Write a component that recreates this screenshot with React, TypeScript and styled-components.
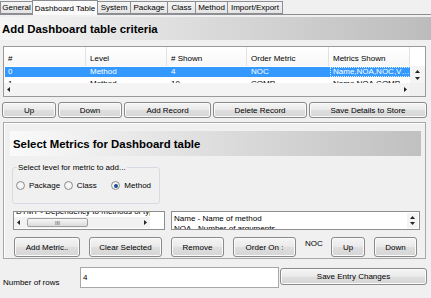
import React from "react";
import styled, { createGlobalStyle } from "styled-components";

const Global = createGlobalStyle`
  html, body { margin: 0; padding: 0; background: #f0f0f0; }
  body { font-family: "Liberation Sans", Arial, sans-serif; font-size: 8px; color: #000; }
  * { box-sizing: border-box; }
`;

const Root = styled.div`
  width: 431px;
  height: 298px;
  overflow: hidden;
  background: #f0f0f0;
`;

const TabStrip = styled.div`
  display: flex;
  align-items: flex-end;
  height: 15px;
  border-bottom: 1px solid #8c8e94;
`;

const Tab = styled.div<{ $w: number; $active?: boolean }>`
  width: ${(p) => p.$w}px;
  height: ${(p) => (p.$active ? 15 : 13)}px;
  margin-bottom: ${(p) => (p.$active ? -1 : 0)}px;
  margin-left: -1px;
  &:first-child { margin-left: 0; }
  border: 1px solid #8c8e94;
  border-bottom: ${(p) => (p.$active ? "none" : "1px solid #8c8e94")};
  background: ${(p) => (p.$active ? "#fafafa" : "linear-gradient(#f4f4f4, #e4e4e4)")};
  display: flex;
  align-items: center;
  justify-content: center;
  font-size: 8px;
  white-space: nowrap;
  position: relative;
  z-index: ${(p) => (p.$active ? 1 : 0)};
`;

const HeadingBar = styled.div<{ $size: number }>`
  height: ${(p) => p.$size}px;
  display: flex;
  align-items: center;
  padding-left: 3px;
  background: linear-gradient(to right, #f6f6f6, #bcbcbc);
  font-weight: bold;
  font-size: 11.4px;
  white-space: nowrap;
`;

const TopHeading = styled(HeadingBar)`
  margin-top: 2px;
  padding-left: 2px;
`;

const TableBox = styled.div`
  margin: 6px 0 0 3px;
  width: 423px;
  height: 51px;
  border: 1px solid #9a9a9a;
  background: #fff;
  display: grid;
  grid-template-columns: 406px 15px;
  grid-template-rows: 19px 17px 13px;
`;

const cols = "82px 81px 80px 82px 81px";

const HeaderRow = styled.div`
  display: grid;
  grid-template-columns: ${cols};
  background: linear-gradient(#ffffff, #f7f7f7);
`;

const HeaderCell = styled.div`
  border-right: 1px solid #e2e2e2;
  display: flex;
  align-items: center;
  padding-left: 4px;
  padding-top: 3px;
  white-space: nowrap;
`;

const Body = styled.div`
  overflow: hidden;
  padding-top: 1px;
`;

const Row = styled.div<{ $sel?: boolean }>`
  display: grid;
  grid-template-columns: ${cols};
  height: ${(p) => (p.$sel ? 10 : 11)}px;
  line-height: 10px;
  padding-top: ${(p) => (p.$sel ? 0 : 2)}px;
  background: ${(p) => (p.$sel ? "#3399ff" : "#fff")};
  color: ${(p) => (p.$sel ? "#fff" : "#000")};
  margin-left: 1px;
`;

const Cell = styled.div<{ $focus?: boolean }>`
  padding-left: 3px;
  white-space: nowrap;
  overflow: hidden;
  text-overflow: ellipsis;
  outline: ${(p) => (p.$focus ? "1px dotted #d8eaff" : "none")};
  outline-offset: -1px;
`;

const VScroll = styled.div`
  background: #f4f4f4;
  display: flex;
  flex-direction: column;
  align-items: center;
  justify-content: center;
  gap: 4px;
`;

const HScroll = styled.div`
  background: #f4f4f4;
  display: flex;
  align-items: center;
  justify-content: space-between;
  padding: 0 3px;
`;

const Corner = styled.div<{ $white?: boolean }>`
  background: ${(p) => (p.$white ? "#fff" : "#f0f0f0")};
`;

const ButtonRow = styled.div<{ $cols: string }>`
  display: grid;
  grid-template-columns: ${(p) => p.$cols};
`;

const TopButtons = styled(ButtonRow)`
  margin: 5px 0 0 2px;
  height: 16px;
  column-gap: 2px;
`;

const Button = styled.button`
  font-family: inherit;
  font-size: 8px;
  color: #000;
  height: 100%;
  padding: 0;
  border: 1px solid #8a8a8a;
  border-radius: 3px;
  background: linear-gradient(#f5f5f5, #e9e9e9 50%, #dedede 51%, #d6d6d6);
  box-shadow: inset 0 0 0 1px #fbfbfb;
  white-space: nowrap;
`;

const Panel = styled.div`
  margin: 4px 0 0 3px;
  width: 423px;
  height: 137px;
  border: 1px solid #a8a8a8;
  box-shadow: inset 1px 1px 0 #ffffff;
  padding: 8px 4px 1px 6px;
  display: flex;
  flex-direction: column;
`;

const SectionHeading = styled(HeadingBar)`
  flex: 0 0 auto;
  padding-left: 3px;
  background: linear-gradient(to right, #fafafa, #c0c0c0);
`;

const GroupBox = styled.fieldset`
  margin: 7px 0 0 2px;
  padding: 0 0 0 3px;
  width: 148px;
  height: 41px;
  border: 1px solid #d5dbe0;
  border-radius: 3px;
  min-width: 0;
`;

const Legend = styled.legend`
  padding: 0 1px;
  margin-left: 1px;
  font-size: 8px;
  line-height: 9px;
`;

const RadioRow = styled.div`
  display: flex;
  margin-top: 9px;
`;

const RadioItem = styled.label<{ $w: number }>`
  width: ${(p) => p.$w}px;
  display: flex;
  align-items: center;
  gap: 4px;
  font-size: 8px;
`;

const RadioCircle = styled.span<{ $on?: boolean }>`
  width: 9px;
  height: 9px;
  border-radius: 50%;
  border: 1px solid #8e8f8f;
  background: radial-gradient(circle, #ffffff 0%, #e6e6e6 100%);
  display: flex;
  align-items: center;
  justify-content: center;
  &::after {
    content: "";
    width: 4px;
    height: 4px;
    border-radius: 50%;
    background: ${(p) => (p.$on ? "#1c4f8e" : "transparent")};
  }
`;

const ListRow = styled.div`
  display: grid;
  grid-template-columns: 152px 249px;
  column-gap: 6px;
  height: 19px;
  margin: 7px 0 0 3px;
`;

const ListBox = styled.div`
  border: 1px solid #8f8f8f;
  background: #fff;
  overflow: hidden;
  display: grid;
  grid-template-rows: 5px 11px;
  grid-template-columns: 136px 14px;
`;

const ClippedText = styled.div<{ $shift: number }>`
  overflow: hidden;
  white-space: nowrap;
  line-height: 9px;
  padding-left: 2px;
  & > span { display: block; margin-top: ${(p) => p.$shift}px; }
`;

const ListScroll = styled.div`
  background: #f2f2f2;
  display: flex;
  align-items: center;
  padding: 0 3px;
  gap: 7px;
`;

const Thumb = styled.div`
  width: 61px;
  height: 9px;
  border: 1px solid #a0a0a0;
  border-radius: 2px;
  background: linear-gradient(#f6f6f6, #dcdcdc);
  display: flex;
  align-items: center;
  justify-content: center;
  font-size: 6px;
  line-height: 6px;
  color: #555;
`;

const Spacer = styled.span`
  flex: 1;
`;

const ListCorner = styled.div`
  grid-column: 2;
  grid-row: 1 / span 2;
  background: #fff;
`;

const TextArea = styled.div`
  border: 1px solid #8f8f8f;
  background: #fff;
  display: grid;
  grid-template-columns: 1fr 12px;
  overflow: hidden;
`;

const TextLines = styled.div`
  padding: 2px 0 0 2px;
  line-height: 10px;
  white-space: nowrap;
  overflow: hidden;
`;

const TAScroll = styled.div`
  display: flex;
  flex-direction: column;
  align-items: center;
  justify-content: center;
  gap: 3px;
  background: #f4f4f4;
  margin: 1px 1px 1px 0;
`;

const BottomButtons = styled(ButtonRow)`
  margin: 7px 0 0 4px;
  height: 20px;
  column-gap: 9px;
`;

const NocLabel = styled.span`
  align-self: start;
  padding-top: 2px;
  text-align: center;
`;

const EntryRow = styled.div`
  display: grid;
  grid-template-columns: 77px 199px 148px;
  margin: 8px 0 0 3px;
  height: 21px;
`;

const EntryLabel = styled.span`
  align-self: end;
  padding-bottom: 1px;
  white-space: nowrap;
`;

const Input = styled.div`
  border: 1px solid #a8a8a8;
  background: #fff;
  display: flex;
  align-items: center;
  padding-left: 2px;
`;

const SaveButton = styled(Button)`
  height: 17px;
  margin: 1px 0 0 1px;
`;

type Dir = "up" | "down" | "left" | "right";
const arrowPaths: Record<Dir, string> = {
  up: "M0 3 L2.5 0 L5 3Z",
  down: "M0 0 L5 0 L2.5 3Z",
  left: "M3 0 L3 5 L0 2.5Z",
  right: "M0 0 L0 5 L3 2.5Z",
};
const Arrow = ({ dir }: { dir: Dir }) => {
  const vert = dir === "up" || dir === "down";
  const w = vert ? 5 : 3;
  const h = vert ? 3 : 5;
  return (
    <svg width={w} height={h} viewBox={`0 0 ${w} ${h}`}>
      <path d={arrowPaths[dir]} fill="#222" />
    </svg>
  );
};

const tabs: [string, number, boolean?][] = [
  ["General", 33],
  ["Dashboard Table", 66, true],
  ["System", 34],
  ["Package", 38],
  ["Class", 29],
  ["Method", 33],
  ["Import/Export", 56],
];

const rows = [
  ["0", "Method", "4", "NOC", "Name,NOA,NOC,VR,RFC,WMC"],
  ["1", "Method", "10", "COMP", "Name,NOA,COMP,VG,RFC"],
];

export default function App() {
  return (
    <Root>
      <Global />
      <TabStrip>
        {tabs.map(([t, w, a]) => (
          <Tab key={t} $w={w} $active={a}>
            {t}
          </Tab>
        ))}
      </TabStrip>

      <TopHeading $size={23}>Add Dashboard table criteria</TopHeading>

      <TableBox>
        <HeaderRow>
          {["#", "Level", "# Shown", "Order Metric", "Metrics Shown"].map((h) => (
            <HeaderCell key={h}>{h}</HeaderCell>
          ))}
        </HeaderRow>
        <Corner $white />
        <Body>
          {rows.map((r, i) => (
            <Row key={i} $sel={i === 0}>
              {r.map((c, j) => (
                <Cell key={j} $focus={i === 0 && j === 4}>
                  {c}
                </Cell>
              ))}
            </Row>
          ))}
        </Body>
        <VScroll>
          <Arrow dir="up" />
          <Arrow dir="down" />
        </VScroll>
        <HScroll>
          <Arrow dir="left" />
          <Arrow dir="right" />
        </HScroll>
        <Corner />
      </TableBox>

      <TopButtons $cols="54px 64px 87px 94px 118px">
        <Button>Up</Button>
        <Button>Down</Button>
        <Button>Add Record</Button>
        <Button>Delete Record</Button>
        <Button>Save Details to Store</Button>
      </TopButtons>

      <Panel>
        <SectionHeading $size={25}>Select Metrics for Dashboard table</SectionHeading>
        <GroupBox>
          <Legend>Select level for metric to add...</Legend>
          <RadioRow>
            <RadioItem $w={48}>
              <RadioCircle />
              Package
            </RadioItem>
            <RadioItem $w={48}>
              <RadioCircle />
              Class
            </RadioItem>
            <RadioItem $w={48}>
              <RadioCircle $on />
              Method
            </RadioItem>
          </RadioRow>
        </GroupBox>

        <ListRow>
          <ListBox>
            <ClippedText $shift={-5}>
              <span>DTMT - Dependency to methods of type</span>
            </ClippedText>
            <ListCorner />
            <ListScroll>
              <Arrow dir="left" />
              <Thumb>III</Thumb>
              <Spacer />
              <Arrow dir="right" />
            </ListScroll>
          </ListBox>
          <TextArea>
            <TextLines>
              Name - Name of method
              <br />
              NOA - Number of arguments
            </TextLines>
            <TAScroll>
              <Arrow dir="up" />
              <Arrow dir="down" />
            </TAScroll>
          </TextArea>
        </ListRow>

        <BottomButtons $cols="66px 73px 53px 63px 17px 34px 43px">
          <Button>Add Metric..</Button>
          <Button>Clear Selected</Button>
          <Button>Remove</Button>
          <Button>Order On :</Button>
          <NocLabel>NOC</NocLabel>
          <Button>Up</Button>
          <Button>Down</Button>
        </BottomButtons>
      </Panel>

      <EntryRow>
        <EntryLabel>Number of rows</EntryLabel>
        <Input>4</Input>
        <SaveButton>Save Entry Changes</SaveButton>
      </EntryRow>
    </Root>
  );
}
